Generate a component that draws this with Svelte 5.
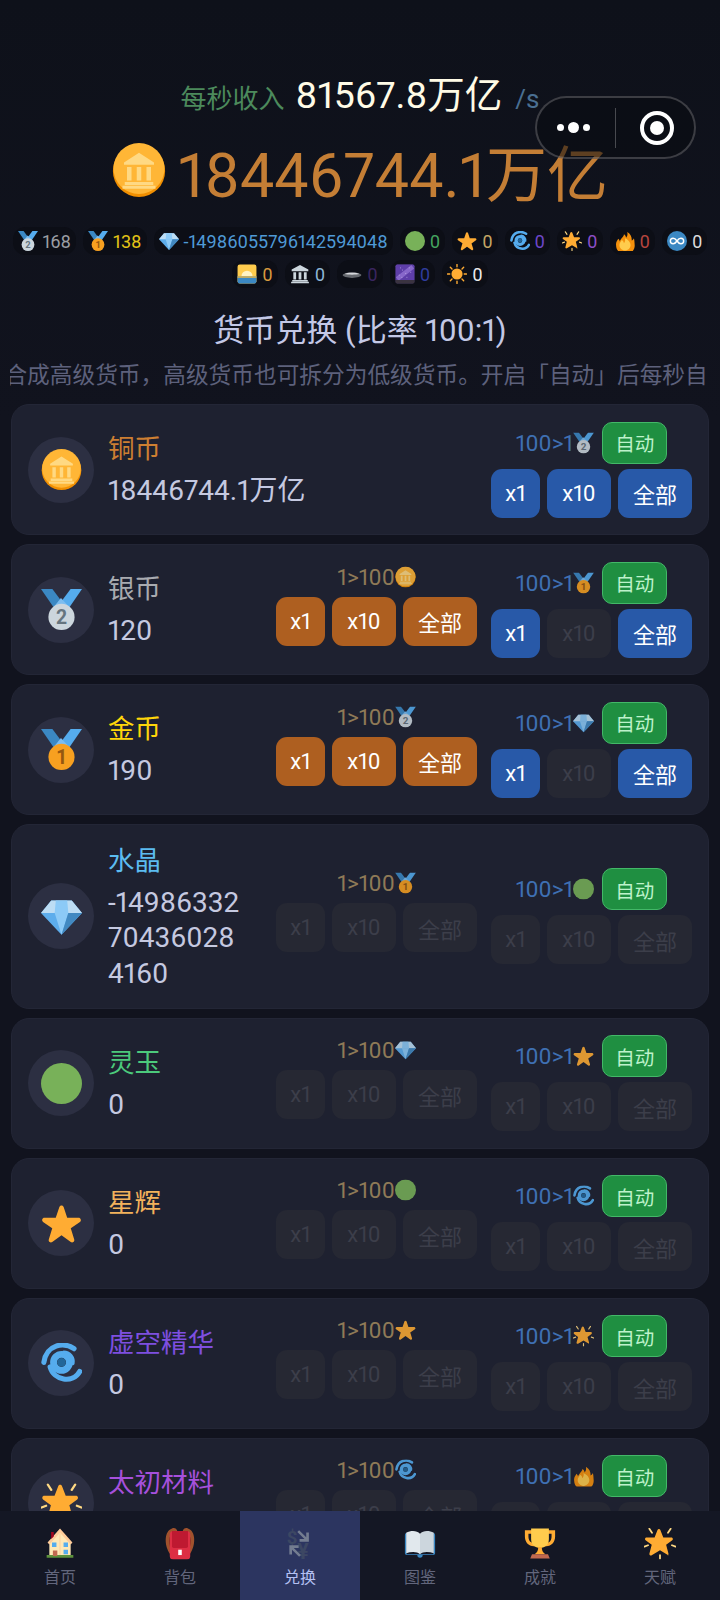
<script>
  const hide = { x1: false, x10: false, all: false };
  const on = { x1: true, x10: true, all: true };
  const noTen = { x1: true, x10: false, all: true };

  const chips = [
    [
      { icon: 'silver', n: '168', c: '#9b9ea3' },
      { icon: 'gold', n: '138', c: '#e3c416' },
      { icon: 'gem', n: '-14986055796142594048', c: '#4f9ad6' },
      { icon: 'jade', n: '0', c: '#45a35f' },
      { icon: 'star', n: '0', c: '#c6a765' },
      { icon: 'void', n: '0', c: '#6d47c9' },
      { icon: 'spark', n: '0', c: '#8c4fc6' },
      { icon: 'fire', n: '0', c: '#b5453e' },
      { icon: 'inf', n: '0', c: '#dcdcdc' }
    ],
    [
      { icon: 'dawn', n: '0', c: '#d99a3e' },
      { icon: 'temple', n: '0', c: '#8fb6d6' },
      { icon: 'ufo', n: '0', c: '#3a2560' },
      { icon: 'galaxy', n: '0', c: '#2f3c9c' },
      { icon: 'sun', n: '0', c: '#ececec' }
    ]
  ];

  const rows = [
    { name: '铜币', c: '#cd7f32', icon: 'coin', value: '18446744.1万亿', up: 'silver', upOn: on },
    { name: '银币', c: '#a9abb0', icon: 'silver', value: '120', down: 'coin', downOn: on, up: 'gold', upOn: noTen },
    { name: '金币', c: '#ffd60a', icon: 'gold', value: '190', down: 'silver', downOn: on, up: 'gem', upOn: noTen },
    { name: '水晶', c: '#5cbcf0', icon: 'gem', value: '-14986332704360284160', down: 'gold', downOn: hide, up: 'jade', upOn: hide },
    { name: '灵玉', c: '#4cca7c', icon: 'jade', value: '0', down: 'gem', downOn: hide, up: 'star', upOn: hide },
    { name: '星辉', c: '#f2b25c', icon: 'star', value: '0', down: 'jade', downOn: hide, up: 'void', upOn: hide },
    { name: '虚空精华', c: '#7e4fe0', icon: 'void', value: '0', down: 'star', downOn: hide, up: 'spark', upOn: hide },
    { name: '太初材料', c: '#a650dc', icon: 'spark', value: '0', down: 'void', downOn: hide, up: 'fire', upOn: hide }
  ];

  const tabs = [
    { label: '首页', icon: 'house' },
    { label: '背包', icon: 'bag' },
    { label: '兑换', icon: 'swap', active: true },
    { label: '图鉴', icon: 'book' },
    { label: '成就', icon: 'trophy' },
    { label: '天赋', icon: 'spark' }
  ];
</script>

{#snippet ic(name, cls)}
  <svg class="ic {cls}" viewBox="0 0 36 36"><use href="#i-{name}" /></svg>
{/snippet}

{#snippet btns(kind, state)}
  <div class="btns">
    <button class="b1 {state.x1 ? kind : 'off'}">x1</button>
    <button class="b10 {state.x10 ? kind : 'off'}">x10</button>
    <button class="b-all {state.all ? kind : 'off'}">全部</button>
  </div>
{/snippet}

<svg class="sprite" aria-hidden="true">
  <defs>
    <symbol id="i-coin" viewBox="0 0 36 36">
      <circle cx="18" cy="18.600" r="17.400" fill="#f18f01" />
      <circle cx="18" cy="17" r="17" fill="#ffb636" />
      <path d="M18 6.500 28 13v1.500H8V13z M10 16h3v9h-3z M16.500 16h3v9h-3z M23 16h3v9h-3z M8.500 26h19v2h-19z M7 28.500h22v2H7z" fill="#ffd983" />
    </symbol>
    <symbol id="i-silver" viewBox="0 0 36 36">
      <path d="M0 0h10l12 16H11z" fill="#3b88c3" />
      <path d="M36 0H26L14 16h11z" fill="#55acee" />
      <path d="M11 16 17.500 8l7.500 8-7 3z" fill="#7cbdf0" />
      <circle cx="18" cy="24.500" r="11.500" fill="#ccd6dd" />
      <text x="18" y="30.700" font-size="17" font-weight="700" text-anchor="middle" font-family="Roboto, sans-serif" fill="#66757f">2</text>
    </symbol>
    <symbol id="i-gold" viewBox="0 0 36 36">
      <path d="M0 0h10l12 16H11z" fill="#3b88c3" />
      <path d="M36 0H26L14 16h11z" fill="#55acee" />
      <path d="M11 16 17.500 8l7.500 8-7 3z" fill="#7cbdf0" />
      <circle cx="18" cy="24.500" r="11.500" fill="#f7a020" />
      <text x="18" y="30.700" font-size="17" font-weight="700" text-anchor="middle" font-family="Roboto, sans-serif" fill="#95570f">1</text>
    </symbol>
    <symbol id="i-gem" viewBox="0 0 36 36">
      <path d="M9 4h18l9 11-18 19L0 15z" fill="#5dadec" />
      <path d="M9 4h18l9 11H0z" fill="#bdddf4" />
      <path d="M12 15h12L18 34z" fill="#8ccaf7" />
      <path d="M24 15h12L18 34z" fill="#4289c1" />
      <path d="M13 4h10l1 11H12z" fill="#8ccaf7" />
    </symbol>
    <symbol id="i-jade" viewBox="0 0 36 36">
      <circle cx="18" cy="18" r="18" fill="#78b159" />
    </symbol>
    <symbol id="i-star" viewBox="0 0 36 36">
      <path d="M27.287 34.627c-.404 0-.806-.124-1.152-.371L18 28.422l-8.135 5.834c-.694.497-1.629.497-2.321-.004-.691-.5-.97-1.392-.711-2.203l3.034-9.792-8.062-5.681c-.688-.507-.97-1.399-.709-2.21.262-.81 1.013-1.36 1.864-1.371L12.947 13l3.179-9.549c.269-.808 1.021-1.354 1.874-1.354s1.604.546 1.874 1.354L23 13l10.043.013c.853.011 1.603.562 1.864 1.371.262.811-.021 1.703-.709 2.21l-8.062 5.681 3.034 9.792c.259.812-.02 1.703-.711 2.203-.346.25-.751.371-1.172.371z" fill="#ffac33" />
    </symbol>
    <symbol id="i-void" viewBox="0 0 36 36">
      <path d="M29 5C20-1 5 1 2.500 17" fill="none" stroke="#55acee" stroke-width="4.500" stroke-linecap="round" />
      <path d="M8 21c3 12 20 15 26 4" fill="none" stroke="#55acee" stroke-width="4.500" stroke-linecap="round" />
      <path d="M20 8c5 0 9 5 8 10" fill="none" stroke="#55acee" stroke-width="3" stroke-linecap="round" />
      <circle cx="18" cy="17" r="7" fill="none" stroke="#55acee" stroke-width="6" />
      <circle cx="18" cy="17" r="3.800" fill="#226699" />
    </symbol>
    <symbol id="i-spark" viewBox="0 0 36 36">
      <path d="M28.300 31.400c-.3 0-.7-.1-1-.3L18 25.600 8.700 31.100c-.6.400-1.400.400-2 0-.6-.400-.8-1.200-.6-1.900l2.600-9.700-6.900-5.100c-.6-.400-.8-1.200-.6-1.900.2-.7.900-1.200 1.600-1.200l9.100-.1 3.300-8.500c.3-.700.9-1.100 1.600-1.100s1.300.4 1.600 1.100l3.300 8.500 9.100.1c.7 0 1.400.5 1.600 1.200.2.700 0 1.500-.6 1.900l-6.900 5.100 2.600 9.700c.2.700 0 1.500-.6 1.900-.3.200-.7.300-1.100.3z" fill="#ffac33" />
      <path d="M6 1.500 9 6 M30 1.500 27 6 M18 31v4 M.5 21.500l4-1.500 M35.500 21.500l-4-1.500" stroke="#ffd983" stroke-width="2" stroke-linecap="round" fill="none" />
    </symbol>
    <symbol id="i-fire" viewBox="0 0 36 36">
      <path d="M35 19c0-2.100-.4-4.100-1-6-.6 1.700-2 3.500-4 4 .6-5-1.200-11-8-15 1 3.500.500 7-2 10-.5-3-2-5-4-6 .5 4-5 6.500-7.500 13-.2-2-.8-3.500-2.500-5-1.500 3-5 6-4 12 0 9 7.600 16 17 16s16.500-7 16.500-16z" fill="#f4900c" />
      <path d="M28 25c0 5.500-4.500 10-10 10S8 30.500 8 25c0-4 3-6 4-9 2 1 4 3 4 6 2-2 3-6 2-9 6 3 10 7 10 12z" fill="#ffcc4d" />
    </symbol>
    <symbol id="i-inf" viewBox="0 0 36 36">
      <circle cx="18" cy="18" r="18" fill="#3b88c3" />
      <path d="M18 18c-2-3-4.500-5-7-5a5 5 0 0 0 0 10c2.500 0 5-2 7-5s4.500-5 7-5a5 5 0 0 1 0 10c-2.500 0-5-2-7-5z" fill="none" stroke="#fff" stroke-width="2.600" />
    </symbol>
    <symbol id="i-dawn" viewBox="0 0 36 36">
      <rect x="1" y="1" width="34" height="34" rx="4" fill="#ffcc4d" />
      <path d="M8 22a10 10 0 0 1 20 0z" fill="#fff3c4" />
      <path d="M1 22h34v9a4 4 0 0 1-4 4H5a4 4 0 0 1-4-4z" fill="#3b88c3" />
      <path d="M1 22h34v3H1z" fill="#f4b942" opacity=".8" />
    </symbol>
    <symbol id="i-temple" viewBox="0 0 36 36">
      <path d="M18 2 33 10v3H3v-3z M6 15h5v13H6z M15.500 15h5v13h-5z M25 15h5v13h-5z M4 29h28v2.500H4z M2 32h32v2.500H2z" fill="#ccd6dd" />
    </symbol>
    <symbol id="i-ufo" viewBox="0 0 36 36">
      <ellipse cx="18" cy="20" rx="17" ry="5" fill="#66696f" />
      <path d="M5 18c3-3 23-3 26 0-5 1.500-21 1.500-26 0z" fill="#d6d8dc" />
    </symbol>
    <symbol id="i-galaxy" viewBox="0 0 36 36">
      <rect x="1" y="1" width="34" height="34" rx="3" fill="#3f3264" />
      <path d="M1 4a3 3 0 0 1 3-3h28a3 3 0 0 1 3 3v25H1z" fill="#5e3ea8" />
      <path d="M4 27 32 5" stroke="#a98ae6" stroke-width="8" opacity=".55" />
      <path d="M7 20h1M13 11h1M19 17h1M25 7h1M28 15h1M12 24h1M21 24h1M9 7h1" stroke="#e8dcff" stroke-width="1.500" />
      <path d="M1 29h34v3a3 3 0 0 1-3 3H4a3 3 0 0 1-3-3z" fill="#3a3340" />
    </symbol>
    <symbol id="i-sun" viewBox="0 0 36 36">
      <circle cx="18" cy="18" r="10" fill="#ffac33" />
      <path d="M18 1v4 M18 31v4 M1 18h4 M31 18h4 M6 6l3 3 M27 27l3 3 M6 30l3-3 M27 9l3-3" stroke="#ffac33" stroke-width="2.500" stroke-linecap="round" />
    </symbol>
    <symbol id="i-house" viewBox="0 0 36 36">
      <path d="M6 17 18 5l12 12v15H6z" fill="#ffe8b6" />
      <path d="M18 1 4 17l2 2L18 6l12 13 2-2z" fill="#ffcc9a" />
      <path d="M8 5h3v5L8 13z" fill="#a0041e" />
      <path d="M3 31h30v3H3z" fill="#5c913b" />
      <path d="M10 26h5v6h-5z" fill="#c1694f" />
      <path d="M9 17h5v5H9z M22 17h5v5h-5z M22 25h5v5h-5z" fill="#55acee" />
      <path d="M18 7v24" stroke="#ffcc9a" stroke-width="1" />
    </symbol>
    <symbol id="i-bag" viewBox="0 0 36 36">
      <path d="M7 30C0 20 0 4 9 1c3-1 5 0 6 3h6c1-3 3-4 6-3 9 3 9 19 2 29z" fill="#a0522d" />
      <path d="M9 28C5 20 5 8 10 5h2v23z M27 28c4-8 4-20-1-23h-2v23z" fill="#662113" />
      <rect x="6.500" y="4" width="23" height="32" rx="4" fill="#dd2e44" />
      <path d="M9 4h18v17a2 2 0 0 1-2 2H11a2 2 0 0 1-2-2z" fill="#be1931" />
      <rect x="16" y="25" width="4" height="6" fill="#fff" />
    </symbol>
    <symbol id="i-swap" viewBox="0 0 36 36">
      <text x="3" y="18" font-size="21" font-weight="700" font-family="Roboto, sans-serif" fill="#3c4763">$</text>
      <text x="15" y="35" font-size="24" font-weight="700" font-family="Roboto, sans-serif" fill="#3c4763">¥</text>
      <path d="M17 3 25 11V5.500h3V16H17.500v-3H23L15 5z" fill="#737c90" />
      <path d="M17 33 9 25v5.500H6V20h10.500v3H11l8 8z" fill="#737c90" />
    </symbol>
    <symbol id="i-book" viewBox="0 0 36 36">
      <path d="M1 9c0-2 1-3 2-3v24h30V6c1 0 2 1 2 3v20a2 2 0 0 1-2 2H21a3 3 0 0 1-6 0H3a2 2 0 0 1-2-2z" fill="#3b88c3" />
      <path d="M2.500 6c5-3 12-3 15.500 1v23c-3-3-10-3-15.500-1z" fill="#e1e8ed" />
      <path d="M33.500 6c-5-3-12-3-15.500 1v23c3-3 10-3 15.500-1z" fill="#ccd6dd" />
    </symbol>
    <symbol id="i-trophy" viewBox="0 0 36 36">
      <path d="M1 3h34v7c0 6-4 11-10 11H11C5 21 1 16 1 10z M5 7v3c0 4 2 7 5 7V7z M31 7h-5v10c3 0 5-3 5-7z" fill="#ffac33" fill-rule="evenodd" />
      <path d="M8 1h20v12c0 6-4 10-10 10S8 19 8 13z" fill="#ffcc4d" />
      <path d="M16 22h4c0 4 1 6 4 8H12c3-2 4-4 4-8z" fill="#ffac33" />
      <path d="M9 30h18l2 5H7z" fill="#c1694f" />
    </symbol>
  </defs>
</svg>

<div class="page">
  <div class="capsule">
    <span class="dots"><i></i><b></b><i></i></span>
    <span class="sep"></span>
    <span class="target"></span>
  </div>

  <main class="main">
    <header class="head">
      <div class="income">
        <span class="inc-label">每秒收入</span>
        <span class="inc-num">81567.8万亿</span>
        <span class="inc-unit">/s</span>
      </div>
      <div class="hero">
        {@render ic('coin', 'hero-ic')}
        <span>18446744.1万亿</span>
      </div>
      {#each chips as row}
        <div class="chips">
          {#each row as chip}
            <span class="chip" style="color:{chip.c}">{@render ic(chip.icon, 'chip-ic')}{chip.n}</span>
          {/each}
        </div>
      {/each}
    </header>

    <h1>货币兑换 (比率 100:1)</h1>
    <div class="tip"><p>低级货币可合成高级货币，高级货币也可拆分为低级货币。开启「自动」后每秒自动兑换。</p></div>

    <section class="list">
      {#each rows as r}
        <article class="card">
          <div class="avatar">{@render ic(r.icon, 'av-ic')}</div>
          <div class="info">
            <div class="name" style="color:{r.c}">{r.name}</div>
            <div class="val">{r.value}</div>
          </div>
          {#if r.down}
            <div class="col col-down">
              <div class="rate rate-down">1&gt;100{@render ic(r.down, 'rate-ic')}</div>
              {@render btns('orange', r.downOn)}
            </div>
          {/if}
          <div class="col col-up">
            <div class="top">
              <div class="rate rate-up">100&gt;1{@render ic(r.up, 'rate-ic')}</div>
              <button class="auto">自动</button>
            </div>
            {@render btns('blue', r.upOn)}
          </div>
        </article>
      {/each}
    </section>
  </main>

  <nav class="nav">
    {#each tabs as t}
      <div class="tab" class:active={t.active}>
        {@render ic(t.icon, 'tab-ic')}
        <span>{t.label}</span>
      </div>
    {/each}
  </nav>
</div>

<style>
  :global(body) { margin: 0; background: #10121c; }
  * { box-sizing: border-box; }

  .sprite { display: block; width: 0; height: 0; }
  .ic { display: block; flex: none; }

  .page {
    position: relative;
    height: 1600px;
    display: flex;
    flex-direction: column;
    overflow: hidden;
    font-family: Roboto, "Noto Sans CJK SC", sans-serif;
    font-variant-numeric: proportional-nums;
    background: linear-gradient(#0e111a, #11131e 420px);
  }

  .capsule {
    position: absolute;
    top: 96px;
    left: 535px;
    width: 161px;
    height: 63px;
    z-index: 5;
    border-radius: 32px;
    border: 2px solid rgba(255, 255, 255, .2);
    background: rgba(10, 11, 16, .55);
  }
  .dots {
    position: absolute;
    left: 20px;
    top: 24px;
    display: flex;
    align-items: center;
    gap: 4px;
  }
  .dots i { width: 7px; height: 7px; border-radius: 50%; background: #fff; }
  .dots b { width: 11px; height: 11px; border-radius: 50%; background: #fff; }
  .sep { position: absolute; left: 78px; top: 10px; width: 1px; height: 40px; background: rgba(255, 255, 255, .25); }
  .target {
    position: absolute;
    left: 103px;
    top: 13px;
    width: 34px;
    height: 34px;
    border-radius: 50%;
    border: 4px solid #fff;
  }
  .target::after {
    content: '';
    position: absolute;
    left: 6px;
    top: 6px;
    width: 14px;
    height: 14px;
    border-radius: 50%;
    background: #fff;
  }

  .main { flex: 1; min-height: 0; overflow: hidden; }

  .head { padding-top: 64px; }
  .income {
    display: flex;
    justify-content: center;
    align-items: baseline;
    height: 48px;
    gap: 11px;
  }
  .inc-label { font-size: 26px; color: #4c8a5c; }
  .inc-num { font-size: 37.500px; color: #fffbe6; }
  .inc-unit { font-size: 26px; color: #4a6f92; margin-left: 2px; }

  .hero {
    display: flex;
    justify-content: center;
    align-items: center;
    gap: 12px;
    height: 70px;
    margin: 23px 0 22px;
    font-size: 61px;
    color: #c47e35;
  }
  .hero-ic { width: 54px; height: 56px; }

  .chips {
    display: flex;
    justify-content: center;
    gap: 7px;
    margin-top: 5px;
    white-space: nowrap;
  }
  .chip {
    display: flex;
    align-items: center;
    gap: 5px;
    height: 28px;
    padding: 0 5px;
    border-radius: 12px;
    font-size: 18px;
    background: #0c0e16;
  }
  .chip-ic { width: 20px; height: 22px; }

  h1 {
    margin: 23px 0 0;
    height: 40px;
    line-height: 40px;
    text-align: center;
    font-size: 31px;
    font-weight: 400;
    color: #c3c8e6;
  }
  .tip { margin: 10px 13px 0 10px; height: 30px; overflow: hidden; }
  .tip p {
    margin: 0;
    line-height: 30px;
    font-size: 22.700px;
    white-space: nowrap;
    color: #5d617c;
    transform: translateX(-119px);
  }

  .list { display: flex; flex-direction: column; gap: 9px; margin: 13px 11px 0; }
  .card {
    display: flex;
    align-items: center;
    padding: 16.500px 16px;
    border-radius: 18px;
    background: #1e2130;
    border: 1px solid #232636;
  }
  .avatar {
    flex: none;
    width: 66px;
    height: 66px;
    border-radius: 50%;
    display: flex;
    align-items: center;
    justify-content: center;
    background: #2c2f42;
  }
  .av-ic { width: 41px; height: 41px; }

  .info { flex: 1; min-width: 0; margin-left: 14px; }
  .name { font-size: 26.500px; line-height: 38px; margin-bottom: 5px; }
  .val {
    font-size: 28px;
    line-height: 35.500px;
    color: #c5c9e0;
    word-break: break-all;
  }

  .col { flex: none; display: flex; flex-direction: column; align-items: center; }
  .col-down { margin-left: 32px; padding-bottom: 11px; }
  .col-up { margin-left: 14px; }

  .top { display: flex; align-items: center; gap: 8px; height: 42px; margin-bottom: 5px; }
  .rate { display: flex; align-items: center; font-size: 22.500px; }
  .rate-down { height: 28px; margin-bottom: 6px; color: #8f7a57; }
  .rate-up { color: #3f70b3; }
  .rate-ic { width: 21px; height: 22px; opacity: .85; }

  .btns { display: flex; gap: 7px; }
  button {
    height: 49px;
    padding: 0;
    border: none;
    border-radius: 11px;
    font: inherit;
    font-size: 22px;
    color: #fff;
  }
  .b1 { width: 49px; }
  .b10 { width: 64px; }
  .b-all { width: 74px; }
  .blue { background: #2859a8; }
  .orange { background: #ae5f20; }
  .off { background: #262833; color: #3c3e4a; }

  .auto {
    width: 65px;
    height: 42px;
    border: 1px solid #43b868;
    border-radius: 10px;
    font-size: 19.500px;
    color: #bdf2cb;
    background: #1f8f41;
  }

  .nav { flex: none; height: 89px; display: flex; background: #141724; position: relative; }
  .tab {
    flex: 1;
    display: flex;
    flex-direction: column;
    align-items: center;
    padding-top: 16px;
    font-size: 16px;
    color: #62667c;
  }
  .tab span { margin-top: 5px; line-height: 26px; }
  .tab.active { background: #2c3560; color: #b4c0f2; }
  .tab-ic { width: 32px; height: 33px; }
</style>
